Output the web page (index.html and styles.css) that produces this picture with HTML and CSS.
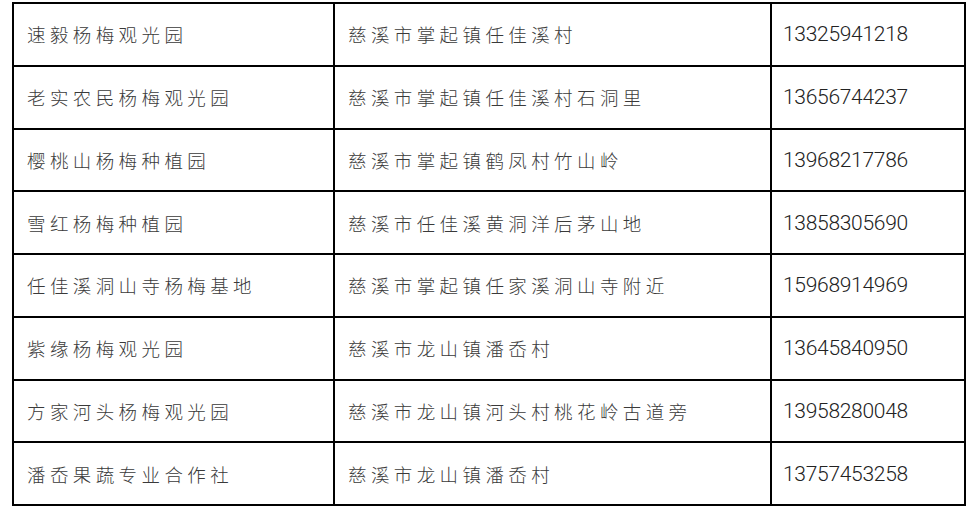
FILE: index.html
```html
<!DOCTYPE html>
<html lang="zh-CN">
<head>
<meta charset="utf-8">
<title>杨梅观光园</title>
<link rel="stylesheet" href="styles.css">
</head>
<body>
<table class="farms">
  <colgroup>
    <col class="c-name">
    <col class="c-addr">
    <col class="c-tel">
  </colgroup>
  <tbody>
    <tr><td class="cjk">速毅杨梅观光园</td><td class="cjk">慈溪市掌起镇任佳溪村</td><td class="tel">13325941218</td></tr>
    <tr><td class="cjk">老实农民杨梅观光园</td><td class="cjk">慈溪市掌起镇任佳溪村石洞里</td><td class="tel">13656744237</td></tr>
    <tr><td class="cjk">樱桃山杨梅种植园</td><td class="cjk">慈溪市掌起镇鹤凤村竹山岭</td><td class="tel">13968217786</td></tr>
    <tr><td class="cjk">雪红杨梅种植园</td><td class="cjk">慈溪市任佳溪黄洞洋后茅山地</td><td class="tel">13858305690</td></tr>
    <tr><td class="cjk">任佳溪洞山寺杨梅基地</td><td class="cjk">慈溪市掌起镇任家溪洞山寺附近</td><td class="tel">15968914969</td></tr>
    <tr><td class="cjk">紫缘杨梅观光园</td><td class="cjk">慈溪市龙山镇潘岙村</td><td class="tel">13645840950</td></tr>
    <tr><td class="cjk">方家河头杨梅观光园</td><td class="cjk">慈溪市龙山镇河头村桃花岭古道旁</td><td class="tel">13958280048</td></tr>
    <tr><td class="cjk">潘岙果蔬专业合作社</td><td class="cjk">慈溪市龙山镇潘岙村</td><td class="tel">13757453258</td></tr>
  </tbody>
</table>
</body>
</html>
```
FILE: styles.css
```css
html, body {
  margin: 0;
  padding: 0;
  background: #ffffff;
}

.farms {
  margin: 2px 0 0 12px;
  border-collapse: collapse;
  table-layout: fixed;
  width: 952px;
  border: 2px solid #000;
}

.c-name { width: 321px; }
.c-addr { width: 437px; }
.c-tel { width: 194px; }

.farms td {
  border: 2px solid #000;
  height: 60.75px;
  padding: 0 0 0 13px;
  vertical-align: middle;
  white-space: nowrap;
}

.cjk {
  font-family: "Noto Sans CJK SC", sans-serif;
  font-size: 18.5px;
  letter-spacing: 4.4px;
  color: #3a3a3a;
  font-weight: 300;
}

.farms td.tel {
  padding-left: 11px;
  font-family: "Roboto", "Liberation Sans", Arial, sans-serif;
  font-size: 21px;
  font-weight: 300;
  color: #222;
  letter-spacing: -0.3px;
}
```
